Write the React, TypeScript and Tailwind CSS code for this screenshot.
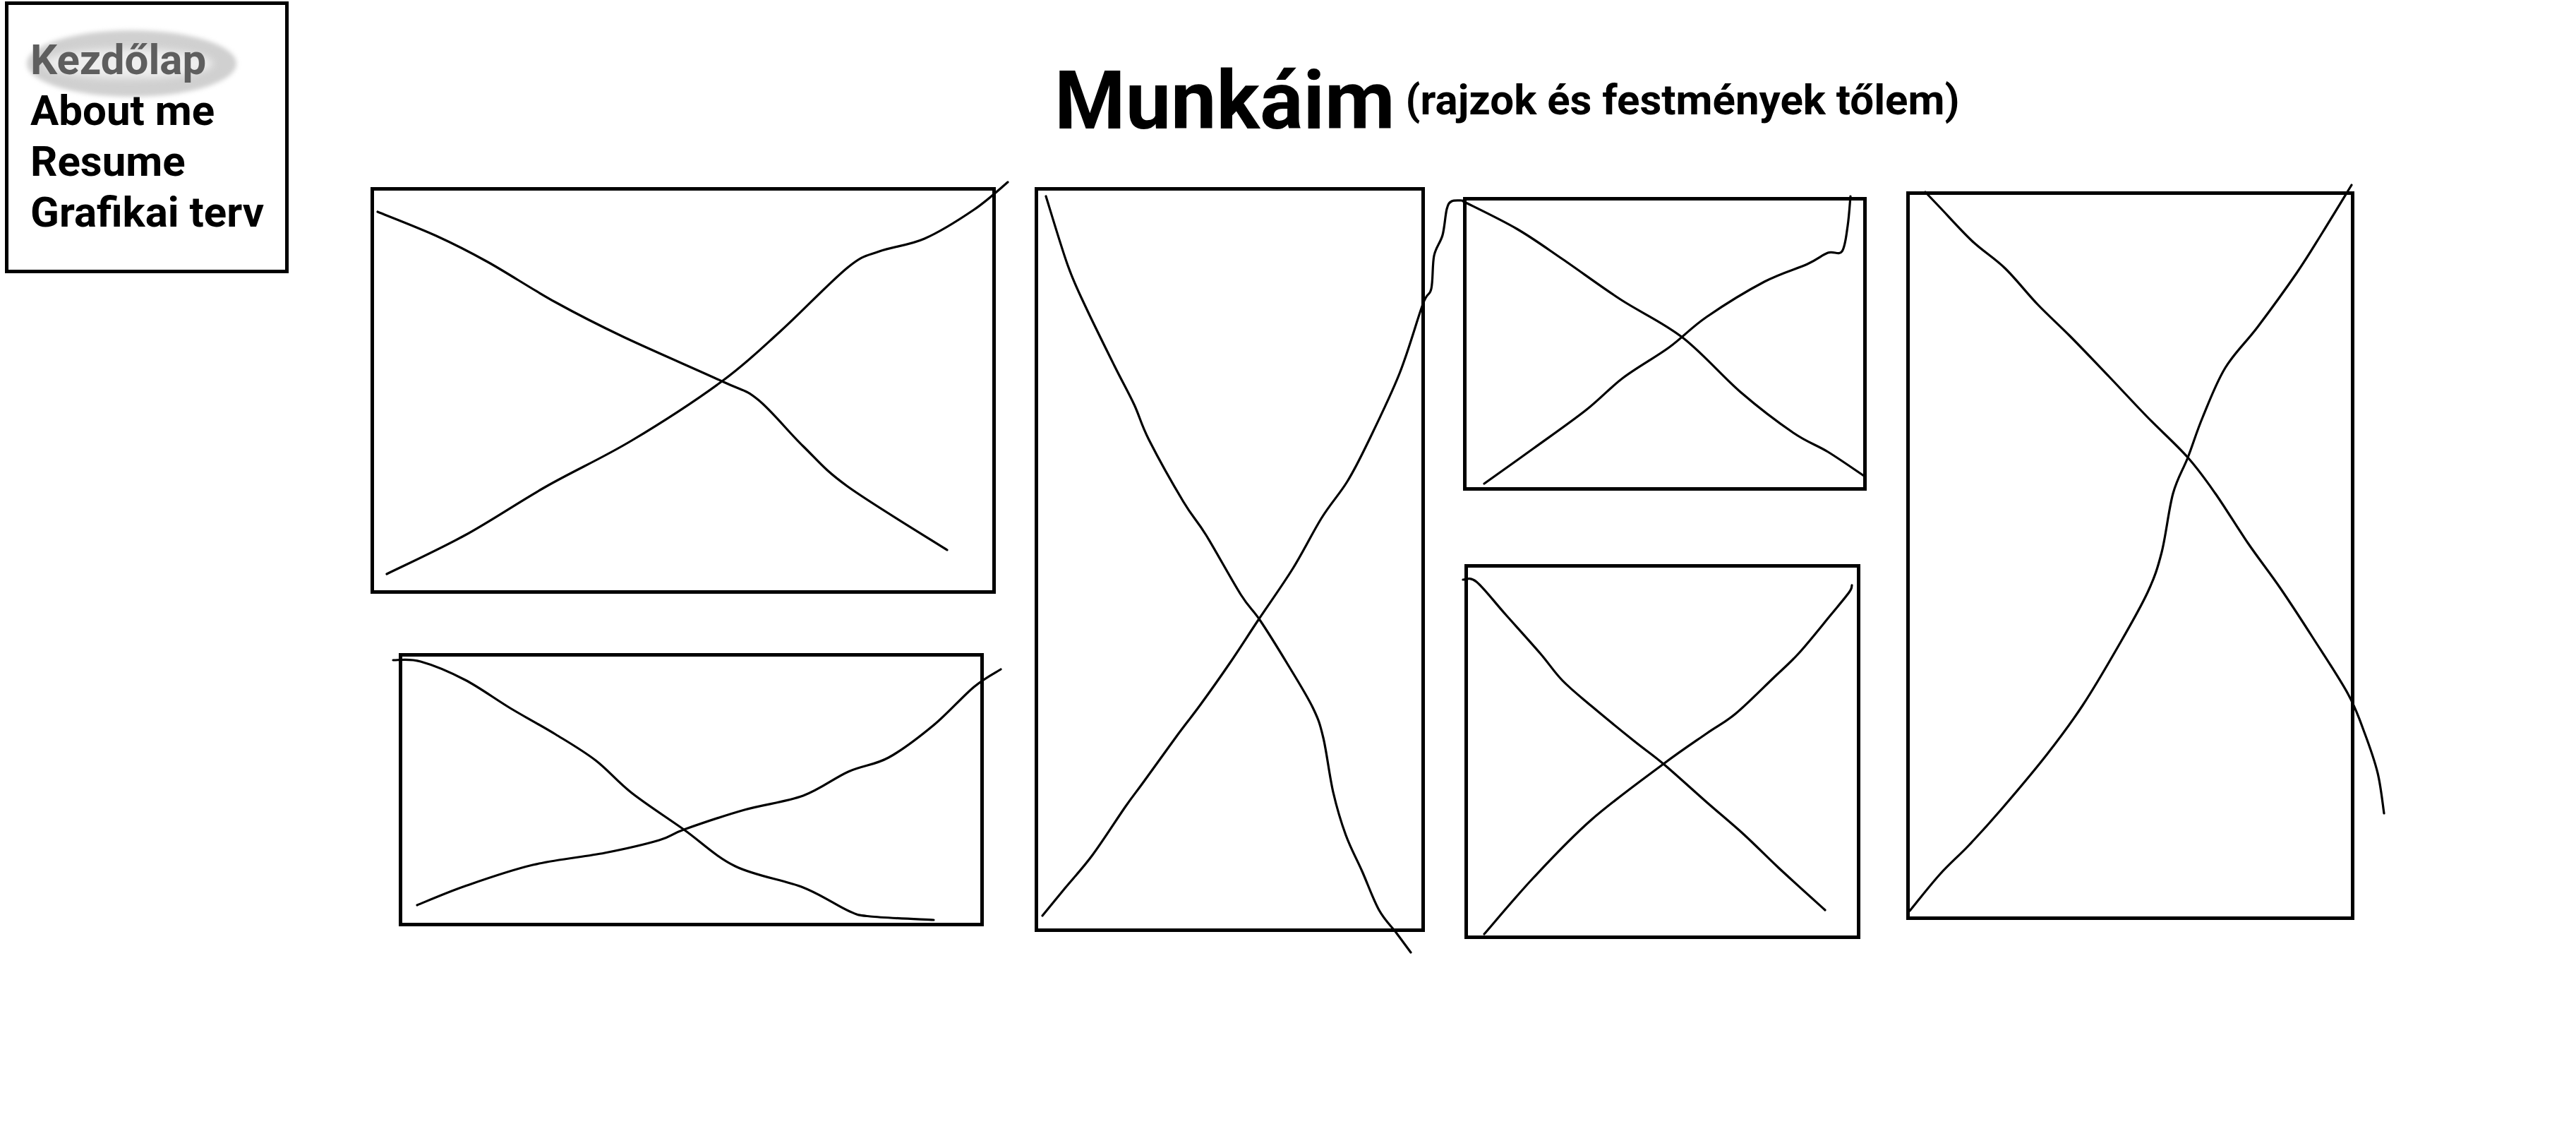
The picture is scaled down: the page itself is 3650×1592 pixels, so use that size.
import React from "react"

type Pt = [number, number]

interface SketchProps {
    className: string
    curves: Pt[][]
}

// catmull-rom through the points, so the hand drawn lines stay soft
function smoothPath(pts: Pt[]) {
    let d = `M${pts[0][0]} ${pts[0][1]}`
    for (let i = 0; i < pts.length - 1; i++) {
        const p0 = pts[i - 1] || pts[i]
        const p1 = pts[i]
        const p2 = pts[i + 1]
        const p3 = pts[i + 2] || p2
        const c1x = p1[0] + (p2[0] - p0[0]) / 6
        const c1y = p1[1] + (p2[1] - p0[1]) / 6
        const c2x = p2[0] - (p3[0] - p1[0]) / 6
        const c2y = p2[1] - (p3[1] - p1[1]) / 6
        d += ` C${c1x} ${c1y} ${c2x} ${c2y} ${p2[0]} ${p2[1]}`
    }
    return d
}

function Sketch({ className, curves }: SketchProps) {
    return (
        <div className={`relative shrink-0 border-[5px] border-black ${className}`}>
            <svg className="pointer-events-none absolute -left-[5px] -top-[5px] h-full w-full overflow-visible">
                {curves.map((c, i) => (
                    <path
                        key={i}
                        d={smoothPath(c)}
                        fill="none"
                        stroke="#000"
                        strokeWidth={3.2}
                        strokeLinecap="round"
                        strokeLinejoin="round"
                    />
                ))}
            </svg>
        </div>
    )
}

const r1: Pt[][] = [
    [[10, 35], [93, 69], [166, 106], [262, 163], [358, 212], [498, 275], [549, 301], [613, 367], [676, 424], [817, 514]],
    [[23, 548], [134, 493], [249, 424], [370, 359], [498, 275], [581, 204], [676, 114], [721, 91], [785, 73], [855, 32], [903, -7]],
]

const r2: Pt[][] = [
    [[-8, 10], [31, 12], [94, 38], [158, 78], [222, 115], [279, 152], [330, 198], [404, 250], [477, 302], [573, 332], [637, 365], [668, 373], [758, 378]],
    [[26, 357], [94, 330], [190, 300], [292, 283], [369, 265], [404, 250], [490, 222], [573, 202], [637, 168], [694, 148], [758, 102], [815, 48], [853, 23]],
]

const r3: Pt[][] = [
    [[16, 13], [47, 111], [72, 169], [113, 253], [141, 308], [162, 358], [211, 446], [243, 493], [292, 577], [319, 613], [358, 675], [394, 737], [409, 780], [423, 857], [441, 918], [464, 969], [488, 1024], [513, 1057], [533, 1084]],
    [[11, 1032], [43, 993], [82, 946], [129, 877], [154, 843], [201, 778], [235, 733], [276, 675], [317, 613], [366, 540], [407, 468], [443, 417], [472, 362], [517, 264], [550, 166], [562, 144], [566, 97], [578, 68], [584, 31], [591, 20], [606, 19]],
]

const r4: Pt[][] = [
    [[0, 6], [76, 45], [141, 88], [223, 145], [311, 199], [394, 277], [468, 334], [517, 361], [568, 395]],
    [[30, 406], [100, 356], [174, 302], [227, 256], [292, 213], [345, 170], [427, 120], [488, 95], [517, 79], [537, 77], [545, 41], [549, -1]],
]

const r5: Pt[][] = [
    [[-2, 22], [17, 25], [58, 71], [107, 126], [139, 165], [180, 201], [241, 251], [282, 283], [343, 337], [396, 383], [445, 430], [511, 490]],
    [[28, 524], [98, 444], [180, 362], [282, 283], [343, 240], [384, 212], [437, 162], [474, 126], [519, 72], [545, 40], [549, 30]],
]

const r6: Pt[][] = [
    [[27, 1], [48, 23], [94, 71], [140, 109], [186, 160], [232, 205], [287, 262], [342, 320], [399, 377], [438, 428], [484, 498], [530, 562], [576, 632], [626, 712], [649, 766], [668, 824], [677, 881]],
    [[5, 1019], [48, 967], [89, 926], [135, 875], [199, 798], [250, 728], [300, 645], [342, 568], [362, 511], [378, 428], [399, 377], [420, 320], [452, 250], [498, 192], [553, 116], [590, 58], [631, -9]],
]

function Nav() {
    return (
        <nav className="relative ml-[7px] mt-[2px] h-[385px] w-[402px] shrink-0 border-[5px] border-black pl-[31px] pt-[42px]">
            {/* brush highlight behind the active link */}
            <div className="absolute left-[26px] top-[36px] h-[94px] w-[297px] rounded-[50%] bg-[#d0d0d0] blur-[3px]" />
            <div className="absolute left-[50px] top-[62px] h-[42px] w-[240px] rounded-[50%] bg-[#eeeeee] blur-[6px]" />
            <ul className="relative font-[Roboto,sans-serif] text-[60px] font-bold leading-[72px] text-black">
                <li className="text-[#5e5e5e]">Kezdőlap</li>
                <li>About me</li>
                <li>Resume</li>
                <li>Grafikai terv</li>
            </ul>
        </nav>
    )
}

export default function App() {
    return (
        <div className="min-h-[1592px] w-full bg-white">
            <div className="flex items-start">
                <Nav />
                <main className="ml-[116px] flex flex-col">
                    <header className="mt-[85px] flex items-start pl-[969px] font-[Roboto,sans-serif] font-bold text-black">
                        <h1 className="text-[115px] leading-none">Munkáim</h1>
                        <p className="ml-[15px] mt-[27px] whitespace-nowrap text-[60px] leading-none">
                            (rajzok és festmények tőlem)
                        </p>
                    </header>

                    <div className="mt-[65px] flex items-start">
                        <div className="flex shrink-0 flex-col items-start">
                            <Sketch className="h-[576px] w-[886px]" curves={r1} />
                            <Sketch className="ml-[40px] mt-[84px] h-[387px] w-[829px]" curves={r2} />
                        </div>
                        <Sketch className="ml-[55px] h-[1055px] w-[553px]" curves={r3} />
                        <div className="ml-[54px] mt-[14px] flex shrink-0 flex-col items-start">
                            <Sketch className="h-[416px] w-[572px]" curves={r4} />
                            <Sketch className="ml-[2px] mt-[104px] h-[531px] w-[561px]" curves={r5} />
                        </div>
                        <Sketch className="ml-[56px] mt-[6px] h-[1032px] w-[635px]" curves={r6} />
                    </div>
                </main>
            </div>
        </div>
    )
}
